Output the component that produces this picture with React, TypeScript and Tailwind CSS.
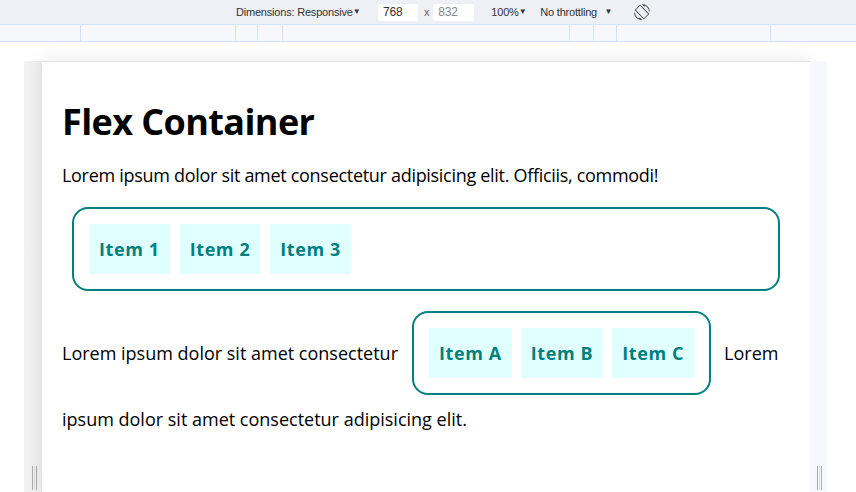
import React from 'react';
import { MdScreenRotation } from 'react-icons/md';

const comic = { fontFamily: '"Comic Sans MS", "Open Sans", sans-serif' };

const rulerStops = [81, 155, 22, 25, 287, 24, 23, 154];

const Item: React.FC<{ label: string }> = ({ label }) => (
  <div className="flex h-[50px] shrink-0 items-center whitespace-nowrap bg-[#e0ffff] px-[10px] text-[18px] font-bold tracking-[0.6px] text-[#008080]">
    {label}
  </div>
);

const Toolbar: React.FC = () => (
  <div className="flex h-[25px] items-center whitespace-nowrap border-b border-[#d3e3fd] bg-[#eef0f6] text-[11px] tracking-[-0.2px] text-[#333]" style={{ fontFamily: '"Liberation Sans", sans-serif' }}>
    <div className="ml-[236px] flex w-[122px] items-center justify-between">
      <span>Dimensions: Responsive</span>
      <span className="text-[8px]">▼</span>
    </div>
    <div className="ml-[20px] flex h-[17px] w-[40px] items-center rounded-[2px] bg-white pl-[5px] text-[12px]">768</div>
    <span className="ml-[6px] mr-[4px] text-[#666]">x</span>
    <div className="flex h-[17px] w-[41px] items-center rounded-[2px] bg-white pl-[5px] text-[12px] text-[#888]">832</div>
    <div className="ml-[17px] flex w-[35px] items-center justify-between">
      <span>100%</span>
      <span className="text-[8px]">▼</span>
    </div>
    <div className="ml-[14px] flex w-[72px] items-center justify-between">
      <span>No throttling</span>
      <span className="text-[8px]">▼</span>
    </div>
    <MdScreenRotation className="ml-[22px] h-[16px] w-[16px] text-[#555]" />
  </div>
);

const Ruler: React.FC = () => (
  <div className="flex h-[17px] border-b border-[#cfe0fb] bg-[#f6f8fc]">
    {rulerStops.map((w, i) => (
      <div key={i} className="h-full border-r border-[#cfe0fb]" style={{ width: w }} />
    ))}
  </div>
);

const Handle: React.FC<{ className: string }> = ({ className }) => (
  <div className={`flex h-[24px] gap-[1px] ${className}`}>
    <div className="w-[1px] bg-[#aaa]" />
    <div className="w-[1px] bg-[#ddd]" />
    <div className="w-[1px] bg-[#aaa]" />
  </div>
);

export default function App() {
  return (
    <div className="h-[492px] w-[856px] overflow-hidden bg-white">
      <Toolbar />
      <Ruler />
      <div className="flex h-[450px] pt-[19px]">
        <div className="ml-[24px] flex w-[17px] flex-col justify-end bg-gradient-to-r from-[#f3f3f3] to-[#ececec] pb-[2px]">
          <Handle className="ml-[8px]" />
        </div>
        <div className="w-[769px] border-l border-t border-[#e4e4e4] bg-white px-[20px] text-black shadow-[0_-6px_14px_rgba(0,0,0,0.05)]" style={comic}>
          <h1 className="mt-[35px] text-[36px] font-bold leading-[50px] tracking-[-0.6px]">Flex Container</h1>
          <p className="mt-[16px] text-[18px] leading-[25px] tracking-[-0.3px]">
            Lorem ipsum dolor sit amet consectetur adipisicing elit. Officiis, commodi!
          </p>
          <div className="mx-[10px] mt-[19px] flex gap-[10px] rounded-[16px] border-2 border-[#008080] p-[15px]">
            <Item label="Item 1" />
            <Item label="Item 2" />
            <Item label="Item 3" />
          </div>
          <div className="mt-[20px] flex items-center whitespace-nowrap text-[18px] leading-[25px]">
            <span>Lorem ipsum dolor sit amet consectetur</span>
            <div className="ml-[14px] mr-[13px] flex gap-[9px] rounded-[16px] border-2 border-[#008080] p-[15px]">
              <Item label="Item A" />
              <Item label="Item B" />
              <Item label="Item C" />
            </div>
            <span>Lorem</span>
          </div>
          <p className="mt-[12px] text-[18px] leading-[25px]">ipsum dolor sit amet consectetur adipisicing elit.</p>
        </div>
        <div className="flex w-[17px] flex-col justify-end bg-[#f7f8fc] pb-[2px]">
          <Handle className="ml-[7px]" />
        </div>
      </div>
    </div>
  );
}
